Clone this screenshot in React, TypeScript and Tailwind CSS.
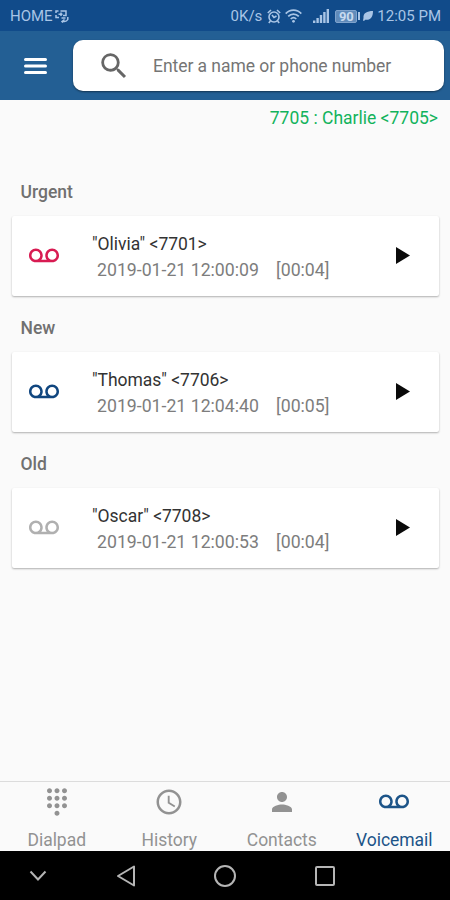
import { ReactNode, useState } from 'react'
import { MdAccessTime, MdDialpad, MdPerson, MdSearch, MdVoicemail } from 'react-icons/md'

interface Voicemail {
  section: string
  caller: string
  date: string
  duration: string
  iconClass: string
}

const voicemails: Voicemail[] = [
  {
    section: 'Urgent',
    caller: '"Olivia" <7701>',
    date: '2019-01-21 12:00:09',
    duration: '[00:04]',
    iconClass: 'text-[#d81b52]',
  },
  {
    section: 'New',
    caller: '"Thomas" <7706>',
    date: '2019-01-21 12:04:40',
    duration: '[00:05]',
    iconClass: 'text-[#10467f]',
  },
  {
    section: 'Old',
    caller: '"Oscar" <7708>',
    date: '2019-01-21 12:00:53',
    duration: '[00:04]',
    iconClass: 'text-[#b0b0b0]',
  },
]

function StatusBar() {
  return (
    <div className="flex h-[31px] items-center bg-[#114b8a] pt-px pr-[9px] pl-[10px] text-[15px] text-[#a9c5e6]">
      <span>HOME</span>
      {/* Call forwarding */}
      <svg className="ml-[2px] h-[13px] w-[14px]" viewBox="0 0 14 13" fill="none" stroke="currentColor" strokeWidth={1.5} aria-hidden="true">
        <path d="M3.500 1H1v2M1 5v2.500h3M5.500 1H11v4.500H8M3.500 4.200h4M6 2.500v3.500M12.800 7v2.500c-1 1.800-3 2.300-5 1.800M6.500 8h4M9.500 9.500l-2.500 2 1 1" />
      </svg>
      <span className="ml-auto">0K/s</span>
      {/* Alarm */}
      <svg className="ml-[5px] h-[15px] w-[14px]" viewBox="0 0 14 15" fill="none" stroke="currentColor" strokeWidth={1.6} aria-hidden="true">
        <circle cx="7" cy="8" r="5" />
        <path d="M5 6l2 2.500L9.500 7M.8 4L4 1M13.200 4L10 1M3.400 12l-1.600 2M10.600 12l1.600 2" />
      </svg>
      {/* Wifi */}
      <svg className="ml-[4px] h-[14px] w-[17px]" viewBox="0 0 17 14" fill="none" stroke="currentColor" strokeWidth={1.7} aria-hidden="true">
        <path d="M.7 4.600C5-.1 12-.1 16.300 4.600M3.200 7.400c3-3 7.600-3 10.600 0M5.700 10c1.600-1.500 4-1.500 5.600 0" />
        <circle cx="8.500" cy="12.300" r="1.400" fill="currentColor" stroke="none" />
      </svg>
      {/* Signal strength */}
      <svg className="ml-[11px] h-[14px] w-[16px]" viewBox="0 0 16 14" fill="currentColor" aria-hidden="true">
        <path d="M0 11.500h2.400V14H0zM3.400 9h2.400v5H3.400zM6.800 6h2.400v8H6.800zM10.200 3h2.400v11h-2.400zM13.600 0H16v14h-2.400z" />
      </svg>
      {/* Battery */}
      <div className="ml-[6px] flex h-[13px] w-[22px] items-center justify-center rounded-[2px] border border-[#7fa3cd] bg-[#608bba] text-[13px] font-bold leading-none text-[#c7daef]">
        90
      </div>
      <div className="ml-px h-[8px] w-[2px] bg-[#a9c5e6]" />
      <svg className="ml-[3px] h-[10px] w-[10px]" viewBox="0 0 10 10" fill="currentColor" aria-hidden="true">
        <path d="M10 0C4 0 0 2 .5 7L0 9.500l1 .5 1.200-1.300C7.500 9.500 10 6 10 0z" />
      </svg>
      <span className="ml-[4px]">12:05 PM</span>
    </div>
  )
}

function Header() {
  return (
    <header className="flex h-[69px] items-center bg-[#235f94] pr-[6px] pl-[23px]">
      <button aria-label="Open menu" className="text-white">
        <svg className="h-[18px] w-[25px]" viewBox="0 0 25 18" stroke="currentColor" strokeWidth={3} strokeLinecap="round" aria-hidden="true">
          <path d="M2.500 2.500h20M2.500 9h20M2.500 15.500h20" />
        </svg>
      </button>
      <label className="ml-[25px] flex h-[51px] flex-1 items-center rounded-[10px] bg-white pl-[24px] shadow-[0_1px_2px_rgba(0,0,0,0.45)]">
        <MdSearch className="size-[34px] text-[#666]" />
        <span className="ml-[22px] pt-px text-[17.5px] tracking-[-0.05px] text-[#757575]">Enter a name or phone number</span>
      </label>
    </header>
  )
}

function VoicemailCard({ item }: { item: Voicemail }) {
  return (
    <section>
      <h2 className="h-[37px] pl-[8.5px] text-[17.5px] leading-[26px] font-medium text-[#707070]">{item.section}</h2>
      <div className="flex h-[80px] items-center rounded-[2px] bg-white pl-[17px] shadow-[0_1px_2px_rgba(0,0,0,0.3)]">
        <MdVoicemail className={`size-[30px] ${item.iconClass}`} />
        <div className="ml-[33px] flex-1 pt-[2px] leading-[26px]">
          <p className="text-[17.5px] tracking-[-0.03px] text-[#333]">{item.caller}</p>
          <p className="flex pl-[5px] text-[17.7px] text-[#7d7d7d]">
            <span className="w-[179px]">{item.date}</span>
            <span>{item.duration}</span>
          </p>
        </div>
        <button aria-label="Play" className="mr-[29px] pb-px">
          <svg className="h-[17px] w-[14px]" viewBox="0 0 14 17" fill="#0a0a0a" aria-hidden="true">
            <path d="M0 0l14 8.500L0 17z" />
          </svg>
        </button>
      </div>
    </section>
  )
}

interface TabProps {
  label: string
  icon: ReactNode
  active: boolean
  onSelect: () => void
}

function Tab({ label, icon, active, onSelect }: TabProps) {
  return (
    <button
      onClick={onSelect}
      className={`flex flex-1 flex-col items-center pt-[5px] pl-px ${active ? 'text-[#1c5488]' : 'text-[#929292]'}`}
    >
      {icon}
      <span className="mt-[13px] text-[17.5px] leading-[20px] tracking-[-0.04px]">{label}</span>
    </button>
  )
}

const tabs = [
  { label: 'Dialpad', icon: <MdDialpad className="size-[30px] shrink-0" /> },
  { label: 'History', icon: <MdAccessTime className="size-[30px] shrink-0" /> },
  { label: 'Contacts', icon: <MdPerson className="size-[30px] shrink-0" /> },
  { label: 'Voicemail', icon: <MdVoicemail className="size-[30px] shrink-0" /> },
]

function SystemNav() {
  return (
    <div className="flex h-[49px] items-center bg-black text-[#b5b5b5]">
      <svg className="ml-[29px] h-[12px] w-[18px]" viewBox="0 0 18 12" fill="none" stroke="currentColor" strokeWidth={2} aria-hidden="true">
        <path d="M1.500 1.500L9 9.500l7.500-8" />
      </svg>
      <svg className="ml-[69px] h-[22px] w-[20px]" viewBox="0 0 20 22" fill="none" stroke="currentColor" strokeWidth={2} strokeLinejoin="round" aria-hidden="true">
        <path d="M18 1.500v19L2 11z" />
      </svg>
      <div className="ml-[78px] size-[22px] rounded-full border-2 border-[#b5b5b5]" />
      <div className="ml-[79px] size-[20px] rounded-[2px] border-2 border-[#b5b5b5]" />
    </div>
  )
}

export default function App() {
  const [activeTab, setActiveTab] = useState('Voicemail')

  return (
    <div className="flex h-[900px] w-[450px] flex-col overflow-hidden bg-[#fafafa] font-[Roboto,sans-serif]">
      <StatusBar />
      <Header />
      <p className="h-[79px] pt-[5px] pr-[12px] text-right text-[17.5px] leading-[26px] text-[#12b35c]">
        7705 : Charlie &lt;7705&gt;
      </p>
      <main className="flex flex-1 flex-col gap-[19px] pr-[11px] pl-[12px]">
        {voicemails.map((item) => (
          <VoicemailCard key={item.section} item={item} />
        ))}
      </main>
      <nav className="flex h-[70px] border-t border-[#dcdcdc]">
        {tabs.map((tab) => (
          <Tab
            key={tab.label}
            label={tab.label}
            icon={tab.icon}
            active={activeTab === tab.label}
            onSelect={() => setActiveTab(tab.label)}
          />
        ))}
      </nav>
      <SystemNav />
    </div>
  )
}
